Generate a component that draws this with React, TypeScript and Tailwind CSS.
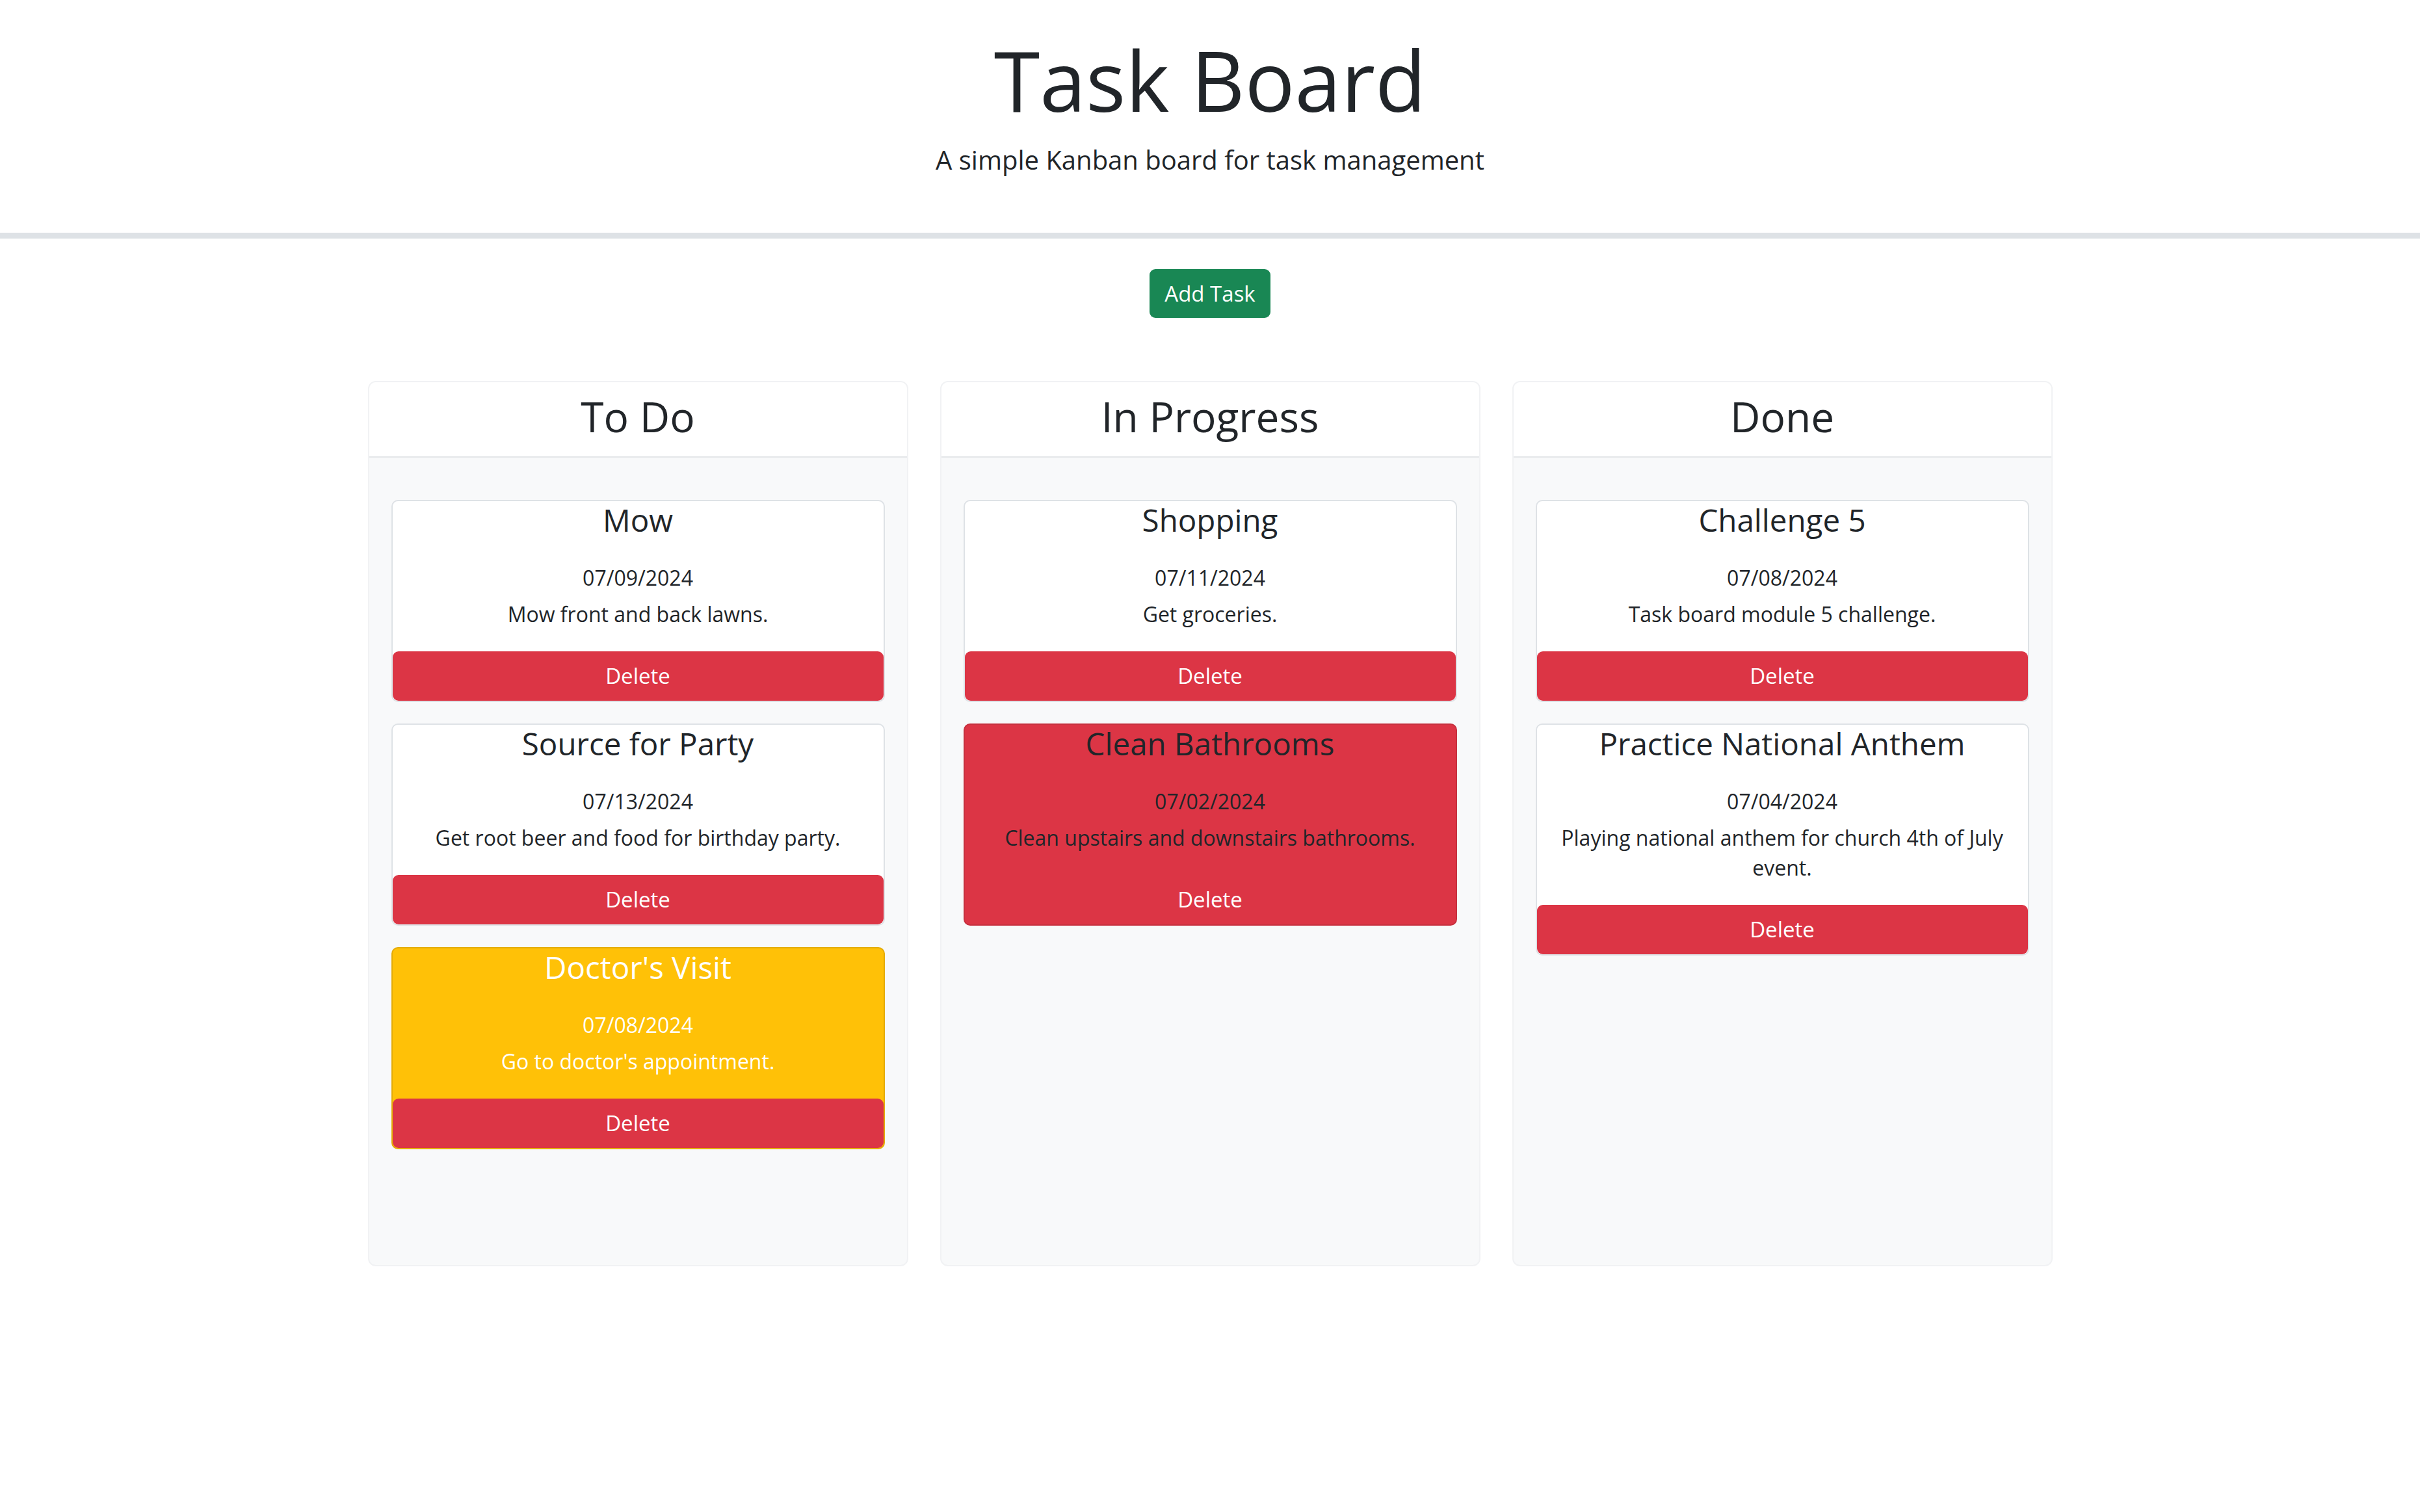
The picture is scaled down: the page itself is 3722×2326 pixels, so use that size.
type Tone = "plain" | "warn" | "late";

type Task = { title: string; date: string; text: string; tone: Tone };

const columns: { name: string; tasks: Task[] }[] = [
  {
    name: "To Do",
    tasks: [
      { title: "Mow", date: "07/09/2024", text: "Mow front and back lawns.", tone: "plain" },
      { title: "Source for Party", date: "07/13/2024", text: "Get root beer and food for birthday party.", tone: "plain" },
      { title: "Doctor's Visit", date: "07/08/2024", text: "Go to doctor's appointment.", tone: "warn" },
    ],
  },
  {
    name: "In Progress",
    tasks: [
      { title: "Shopping", date: "07/11/2024", text: "Get groceries.", tone: "plain" },
      { title: "Clean Bathrooms", date: "07/02/2024", text: "Clean upstairs and downstairs bathrooms.", tone: "late" },
    ],
  },
  {
    name: "Done",
    tasks: [
      { title: "Challenge 5", date: "07/08/2024", text: "Task board module 5 challenge.", tone: "plain" },
      {
        title: "Practice National Anthem",
        date: "07/04/2024",
        text: "Playing national anthem for church 4th of July event.",
        tone: "plain",
      },
    ],
  },
];

const toneClass: Record<Tone, string> = {
  plain: "border-[#dee2e6] bg-white text-[#212529]",
  warn: "border-[#e4ab07] bg-[#ffc107] text-white",
  late: "border-[#c7303e] bg-[#dc3545] text-[#212529]",
};

function TaskCard({ task }: { task: Task }) {
  return (
    <div className={`rounded-[10px] border-2 text-center ${toneClass[task.tone]}`}>
      <h5 className="text-[47.5px] leading-[57px]">{task.title}</h5>
      <p className="mt-[38px] text-[32px] leading-[46px]">{task.date}</p>
      <p className="mt-[10px] px-4 text-[32px] leading-[46px]">{task.text}</p>
      <button className="mt-[34px] block h-[76px] w-full rounded-[9px] bg-[#dc3545] text-[33px] leading-[50px] text-white">
        Delete
      </button>
    </div>
  );
}

function Lane({ name, tasks }: { name: string; tasks: Task[] }) {
  return (
    <section className="flex h-[1362px] w-[831px] flex-col overflow-hidden rounded-[12px] border-2 border-[#f1f2f4] bg-[#f8f9fa]">
      <div className="border-b-2 border-[#e4e6e9] bg-white pt-[14px] pb-[23px] text-center text-[64px] leading-[77px] text-[#212529]">
        {name}
      </div>
      <div className="flex flex-col gap-[33px] px-[34px] pt-[65px]">
        {tasks.map((t) => (
          <TaskCard key={t.title} task={t} />
        ))}
      </div>
    </section>
  );
}

export default function App() {
  return (
    <div className="min-h-[2326px] bg-white font-['Open_Sans',sans-serif] text-[#212529]">
      <header className="border-b-[9px] border-[#dee2e6] pt-[43px] pb-[84px] text-center">
        <h1 className="text-[128px] leading-[160px] font-normal">Task Board</h1>
        <p className="mt-[14px] text-[40px] leading-[57px]">A simple Kanban board for task management</p>
      </header>

      <div className="mt-[47px] flex justify-center">
        <button className="h-[75px] rounded-[9px] bg-[#198754] px-[23px] text-[33px] leading-[50px] text-white">
          Add Task
        </button>
      </div>

      <main className="mt-[97px] flex justify-center gap-[49px]">
        {columns.map((c) => (
          <Lane key={c.name} name={c.name} tasks={c.tasks} />
        ))}
      </main>
    </div>
  );
}
